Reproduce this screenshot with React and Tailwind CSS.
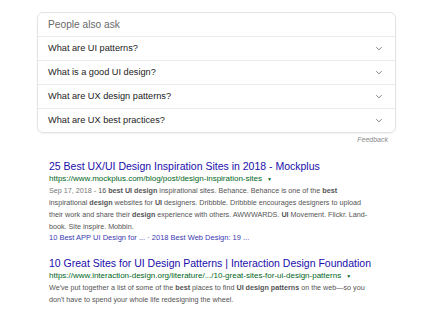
import React from 'react';

const questions = [
  'What are UI patterns?',
  'What is a good UI design?',
  'What are UX design patterns?',
  'What are UX best practices?',
];

function Chevron() {
  return (
    <svg width="8" height="5" viewBox="0 0 8 5" className="text-[#8a8a8a]">
      <path d="M1.2 1.2l2.8 2.6 2.8-2.6" fill="none" stroke="currentColor" strokeWidth="1" />
    </svg>
  );
}

function Result({ title, url, children }) {
  return (
    <div>
      <h3 className="text-[10.5px] leading-[14px] text-[#1a0dab]">{title}</h3>
      <div className="flex items-center gap-[5px] text-[8px] leading-[12px] text-[#006621]">
        <span>{url}</span>
        <span className="text-[5px]">▼</span>
      </div>
      <p className="text-[7.2px] leading-[12px] text-[#545454]">{children}</p>
    </div>
  );
}

export default function App() {
  return (
    <div className="w-[435px] h-[310px] bg-white overflow-hidden font-['Liberation_Sans',Arial,sans-serif]">
      <div className="pl-[37px] pr-[39px] pt-[12px]">
        {/* People also ask */}
        <div className="rounded-[6px] border border-[#e4e4e4] shadow-[0_1px_2px_rgba(0,0,0,0.06)]">
          <div className="h-[23px] flex items-center px-[10px] text-[10.2px] text-[#6a6a6a]">
            People also ask
          </div>
          {questions.map((q) => (
            <div
              key={q}
              className="h-[24px] flex items-center justify-between pl-[10px] pr-[12px] border-t border-[#ebebeb] text-[9.2px] text-[#222]"
            >
              <span>{q}</span>
              <Chevron />
            </div>
          ))}
        </div>
        <div className="text-right pr-[8px] pt-[2px] text-[7px] italic text-[#888]">Feedback</div>

        {/* Results */}
        <div className="pl-[12px] pt-[13px] flex flex-col gap-[13px]">
          <div>
            <Result title="25 Best UX/UI Design Inspiration Sites in 2018 - Mockplus" url="https://www.mockplus.com/blog/post/design-inspiration-sites">
              <span className="text-[#777]">Sep 17, 2018 - </span>16 <b>best UI design</b> inspirational sites. Behance. Behance is one of the <b>best</b>
              <br />
              inspirational <b>design</b> websites for <b>UI</b> designers. Dribbble. Dribbble encourages designers to upload
              <br />
              their work and share their <b>design</b> experience with others. AWWWARDS. <b>UI</b> Movement. Flickr. Land-
              <br />
              book. Site inspire. Mobbin.
            </Result>
            <div className="text-[7.5px] leading-[10px] text-[#3a3ab0]">
              10 Best APP UI Design for ... · 2018 Best Web Design: 19 ...
            </div>
          </div>
          <Result title="10 Great Sites for UI Design Patterns | Interaction Design Foundation" url="https://www.interaction-design.org/literature/.../10-great-sites-for-ui-design-patterns">
            We've put together a list of some of the <b>best</b> places to find <b>UI design patterns</b> on the web—so you
            <br />
            don't have to spend your whole life redesigning the wheel.
          </Result>
        </div>
      </div>
    </div>
  );
}
